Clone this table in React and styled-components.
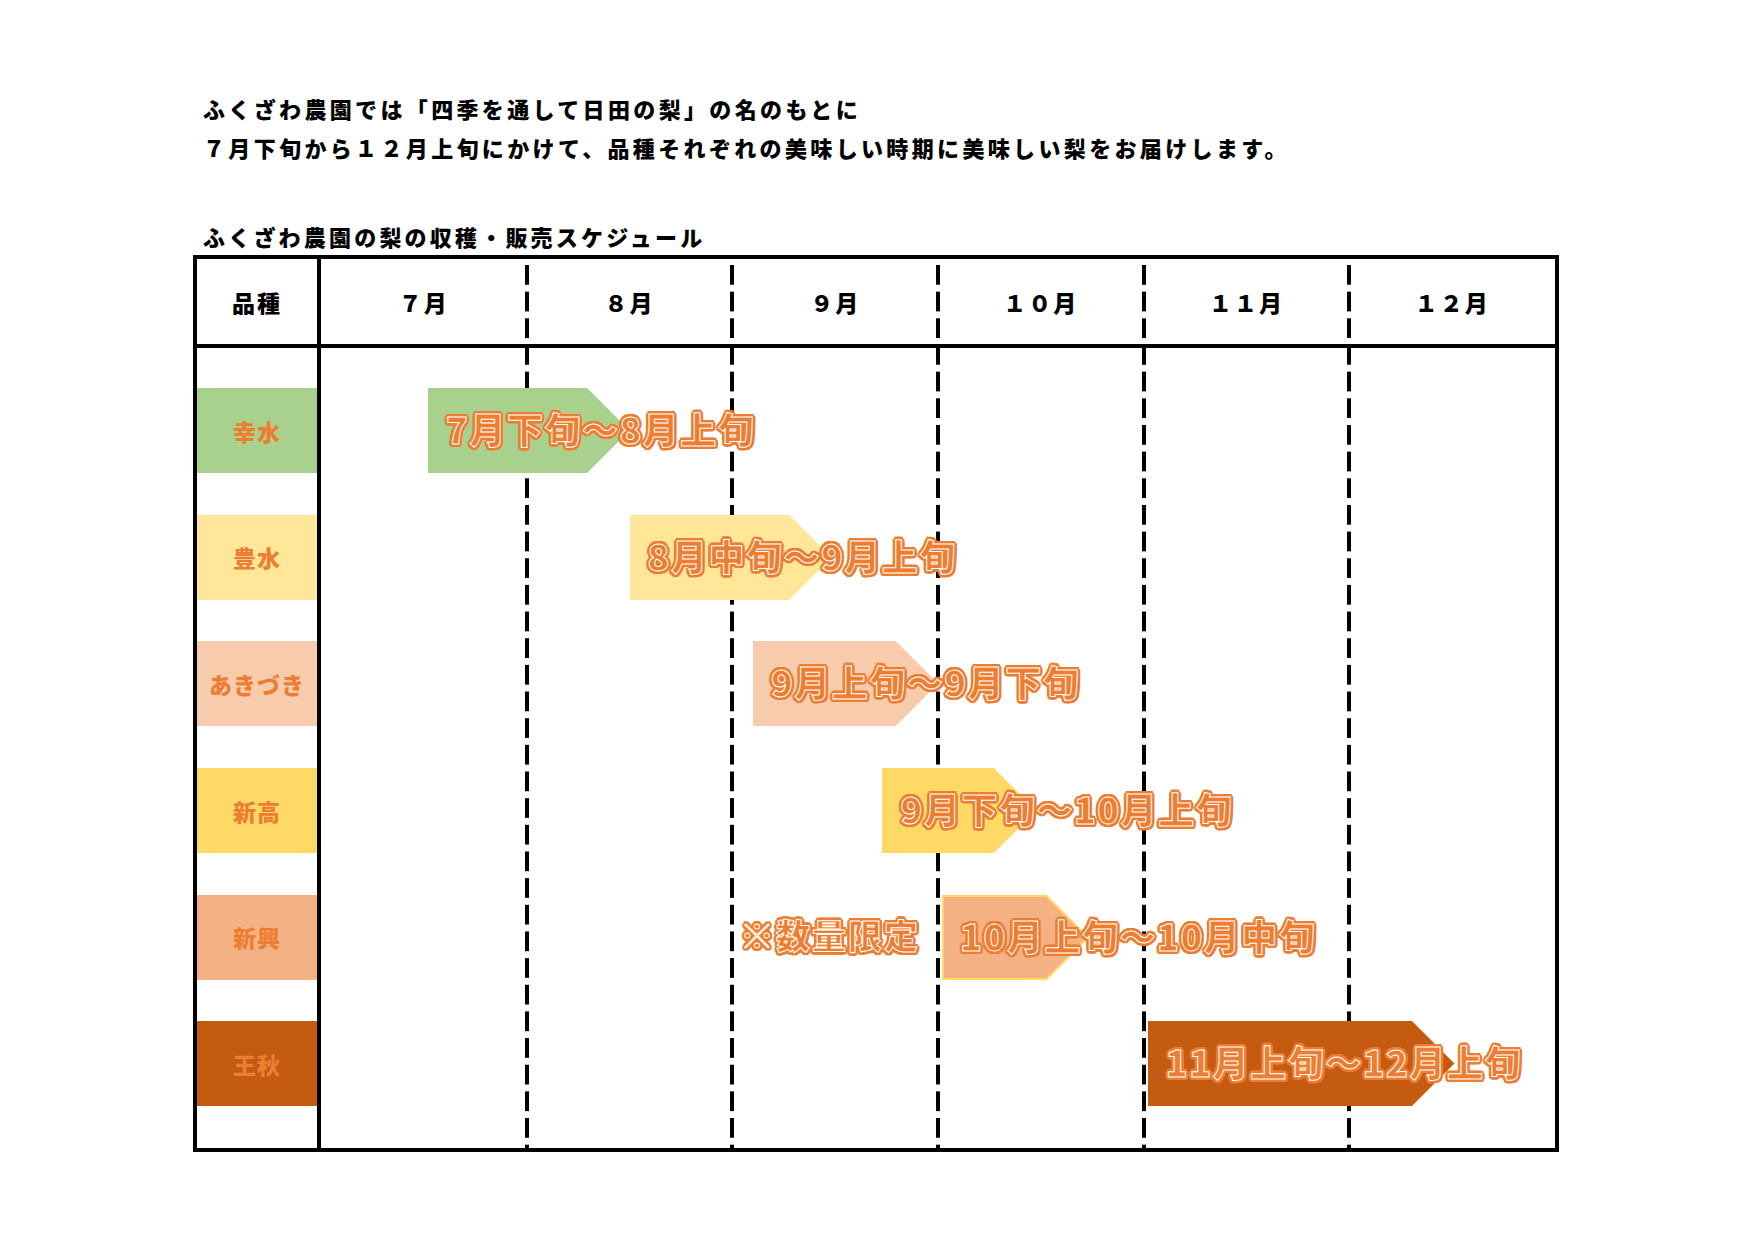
import React from "react";
import styled, { createGlobalStyle } from "styled-components";

const ORANGE = "#ED7D31";
const TIMELINE_W = 1234;
const MONTH_W = TIMELINE_W / 6;
const ROW_H = 85;
const ROW_GAP = 41.7;
const PAD_TOP = 40;
const PAD_BOTTOM = 42;
const DASH = 20;
const PERIOD = 26.667;
const TIP = 42.5;

const haloShadow = (() => {
  const parts = [];
  [1.2, 2.2, 3].forEach((r) => {
    for (let a = 0; a < 360; a += 30) {
      const rad = (a * Math.PI) / 180;
      parts.push(`${(Math.cos(rad) * r).toFixed(2)}px ${(Math.sin(rad) * r).toFixed(2)}px 0 ${ORANGE}`);
    }
  });
  return parts.join(", ");
})();

const GlobalStyle = createGlobalStyle`
  html, body { margin: 0; padding: 0; background: #fff; }
  body { font-family: "Noto Sans CJK JP", "Noto Sans", sans-serif; }
`;

const Page = styled.div`
  width: 1755px;
  min-height: 1241px;
  box-sizing: border-box;
  padding: 89px 0 0 193px;
  font-family: "Noto Sans CJK JP", "Noto Sans", sans-serif;
  color: #000;
`;

const Intro = styled.p`
  margin: 0;
  padding-left: 10px;
  font-size: 22px;
  font-weight: 900;
  line-height: 39px;
  letter-spacing: 3.35px;
`;

const Subtitle = styled.h2`
  margin: 54px 0 4px;
  padding-left: 10px;
  font-size: 22px;
  font-weight: 900;
  line-height: 30px;
  letter-spacing: 3.2px;
`;

const Table = styled.div`
  width: 1366px;
  box-sizing: border-box;
  border: 4px solid #000;
`;

const HeaderRow = styled.div`
  display: grid;
  grid-template-columns: 124px repeat(6, 1fr);
  height: 85px;
  border-bottom: 4px solid #000;
`;

const dashGradient = `linear-gradient(to bottom, #000 ${DASH}px, transparent ${DASH}px)`;

const DashedCol = styled.div`
  background-image: ${(p) =>
    [p.$left && dashGradient, p.$right && dashGradient].filter(Boolean).join(", ") || "none"};
  background-size: 2px ${PERIOD}px;
  background-repeat: repeat-y;
  background-position: ${(p) =>
    [p.$left && `left 0 top ${p.$y}px`, p.$right && `right 0 top ${p.$y}px`]
      .filter(Boolean)
      .join(", ") || "0 0"};
`;

const HeadCell = styled.div`
  display: flex;
  align-items: center;
  justify-content: center;
  font-size: 23px;
  font-weight: 900;
  letter-spacing: 2px;
  border-right: ${(p) => (p.$divider ? "4px solid #000" : "none")};
`;

const MonthHead = styled(DashedCol)`
  display: flex;
  align-items: center;
  justify-content: center;
  font-size: 23px;
  font-weight: 900;
  letter-spacing: 2px;
`;

const Body = styled.div`
  display: grid;
  grid-template-columns: 124px 1fr;
`;

const VarietyCol = styled.div`
  display: flex;
  flex-direction: column;
  gap: ${ROW_GAP}px;
  padding: ${PAD_TOP}px 0 ${PAD_BOTTOM}px;
  border-right: 4px solid #000;
`;

const VarietyCell = styled.div`
  height: ${ROW_H}px;
  display: flex;
  align-items: center;
  justify-content: center;
  background: ${(p) => p.$color};
  color: ${ORANGE};
  font-size: 23px;
  font-weight: 900;
  letter-spacing: 1px;
`;

const Timeline = styled.div`
  display: grid;
  grid-template-columns: minmax(0, 1fr);
`;

const GridLines = styled.div`
  grid-area: 1 / 1;
  display: grid;
  grid-template-columns: repeat(6, 1fr);
`;

const BarRows = styled.div`
  grid-area: 1 / 1;
  display: flex;
  flex-direction: column;
  gap: ${ROW_GAP}px;
  padding: ${PAD_TOP}px 0 ${PAD_BOTTOM}px;
`;

const BarRow = styled.div`
  height: ${ROW_H}px;
  display: flex;
  align-items: center;
`;

const BarGroup = styled.div`
  display: flex;
  justify-content: flex-end;
  align-items: center;
  gap: 22px;
  height: ${ROW_H}px;
`;

const Bar = styled.div`
  flex: none;
  display: grid;
  grid-template-columns: minmax(0, 1fr);
  height: ${ROW_H}px;
`;

const BarShape = styled.svg`
  grid-area: 1 / 1;
  display: block;
  overflow: visible;
`;

const outlined = `
  color: ${ORANGE};
  font-family: "Noto Sans CJK JP", "Noto Sans", sans-serif;
  font-weight: 900;
  white-space: nowrap;
  -webkit-text-stroke: 1px #fff;
  text-shadow: ${haloShadow};
`;

const BarLabel = styled.span`
  grid-area: 1 / 1;
  align-self: center;
  padding-left: 18px;
  padding-bottom: 5px;
  font-size: 36px;
  letter-spacing: 1.5px;
  line-height: 1;
  ${outlined}
`;

const Note = styled.span`
  font-size: 34px;
  letter-spacing: 2px;
  line-height: 1;
  padding-bottom: 5px;
  ${outlined}
`;

const months = ["７月", "８月", "９月", "１０月", "１１月", "１２月"];

const varieties = [
  { name: "幸水", color: "#A9D18E", start: 0.52, end: 1.5, label: "7月下旬～8月上旬" },
  { name: "豊水", color: "#FFE699", start: 1.5, end: 2.48, label: "8月中旬～9月上旬" },
  { name: "あきづき", color: "#F8CBAD", start: 2.1, end: 3.0, label: "9月上旬～9月下旬" },
  { name: "新高", color: "#FFD966", start: 2.73, end: 3.48, label: "9月下旬～10月上旬" },
  {
    name: "新興",
    color: "#F4B183",
    start: 3.02,
    end: 3.735,
    label: "10月上旬～10月中旬",
    note: "※数量限定",
    stroke: "#FFD966",
  },
  { name: "王秋", color: "#C55A11", start: 4.02, end: 5.51, label: "11月上旬～12月上旬" },
];

function ScheduleBar({ v }) {
  const w = (v.end - v.start) * MONTH_W;
  const s = v.stroke ? 1 : 0;
  const points = [
    [s, s],
    [w - TIP, s],
    [w - s, ROW_H / 2],
    [w - TIP, ROW_H - s],
    [s, ROW_H - s],
  ]
    .map((p) => p.join(","))
    .join(" ");
  return (
    <BarGroup style={{ width: v.end * MONTH_W }}>
      {v.note && <Note>{v.note}</Note>}
      <Bar style={{ width: w }}>
        <BarShape width={w} height={ROW_H} viewBox={`0 0 ${w} ${ROW_H}`}>
          <polygon
            points={points}
            fill={v.color}
            stroke={v.stroke || "none"}
            strokeWidth={v.stroke ? 2 : 0}
          />
        </BarShape>
        <BarLabel>{v.label}</BarLabel>
      </Bar>
    </BarGroup>
  );
}

export default function App() {
  return (
    <>
      <GlobalStyle />
      <Page>
        <Intro>
          ふくざわ農園では「四季を通して日田の梨」の名のもとに
          <br />
          ７月下旬から１２月上旬にかけて、品種それぞれの美味しい時期に美味しい梨をお届けします。
        </Intro>
        <Subtitle>ふくざわ農園の梨の収穫・販売スケジュール</Subtitle>
        <Table>
          <HeaderRow>
            <HeadCell $divider>品種</HeadCell>
            {months.map((m, i) => (
              <MonthHead key={m} $left={i > 0} $right={i < 5} $y={6}>
                {m}
              </MonthHead>
            ))}
          </HeaderRow>
          <Body>
            <VarietyCol>
              {varieties.map((v) => (
                <VarietyCell key={v.name} $color={v.color}>
                  {v.name}
                </VarietyCell>
              ))}
            </VarietyCol>
            <Timeline>
              <GridLines>
                {months.map((m, i) => (
                  <DashedCol key={m} $left={i > 0} $right={i < 5} $y={-3} />
                ))}
              </GridLines>
              <BarRows>
                {varieties.map((v) => (
                  <BarRow key={v.name}>
                    <ScheduleBar v={v} />
                  </BarRow>
                ))}
              </BarRows>
            </Timeline>
          </Body>
        </Table>
      </Page>
    </>
  );
}
